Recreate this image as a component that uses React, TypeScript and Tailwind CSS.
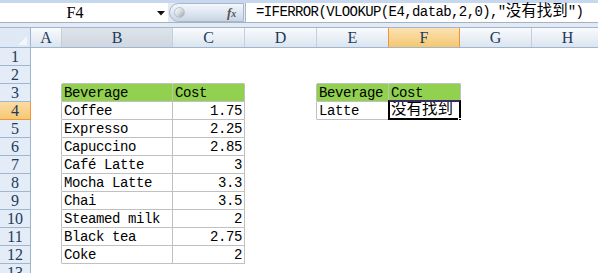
import React from "react";

const FONT = { fontFamily: '"Liberation Mono", "Noto Sans CJK SC", monospace' };
const SERIF = { fontFamily: '"Liberation Serif", "Noto Sans CJK SC", serif' };

type Col = { name: string; w: number };
const cols: Col[] = [
  { name: "A", w: 31 },
  { name: "B", w: 111 },
  { name: "C", w: 72 },
  { name: "D", w: 72 },
  { name: "E", w: 72 },
  { name: "F", w: 72 },
  { name: "G", w: 72 },
  { name: "H", w: 72 },
];

type Cell = { text: string; right?: boolean; green?: boolean; cjk?: boolean };
const data: Record<string, Cell> = {
  B3: { text: "Beverage", green: true },
  C3: { text: "Cost", green: true },
  B4: { text: "Coffee" },
  C4: { text: "1.75", right: true },
  B5: { text: "Expresso" },
  C5: { text: "2.25", right: true },
  B6: { text: "Capuccino" },
  C6: { text: "2.85", right: true },
  B7: { text: "Café Latte" },
  C7: { text: "3", right: true },
  B8: { text: "Mocha Latte" },
  C8: { text: "3.3", right: true },
  B9: { text: "Chai" },
  C9: { text: "3.5", right: true },
  B10: { text: "Steamed milk" },
  C10: { text: "2", right: true },
  B11: { text: "Black tea" },
  C11: { text: "2.75", right: true },
  B12: { text: "Coke" },
  C12: { text: "2", right: true },
  E3: { text: "Beverage", green: true },
  F3: { text: "Cost", green: true },
  E4: { text: "Latte" },
  F4: { text: "没有找到", cjk: true },
};

function inTable(r: number, c: number): boolean {
  const n = cols[c]?.name;
  if (!n) return false;
  if ((n === "B" || n === "C") && r >= 3 && r <= 12) return true;
  if ((n === "E" || n === "F") && r >= 3 && r <= 4) return true;
  return false;
}

function BodyCell({ r, c }: { r: number; c: number }) {
  const col = cols[c];
  const key = col.name + r;
  const cell = data[key];
  const right = inTable(r, c) || inTable(r, c + 1);
  const bottom = inTable(r, c) || inTable(r + 1, c);
  const selected = key === "F4";
  return (
    <div
      className={
        "relative h-[18px] shrink-0 border-r border-b box-border " +
        (right ? "border-r-[#c0c0c0] " : "border-r-white ") +
        (bottom ? "border-b-[#c0c0c0] " : "border-b-white ") +
        (cell?.green ? "bg-[#92d050]" : "bg-white")
      }
      style={{ width: col.w }}
    >
      {cell && (
        <div
          className={
            "whitespace-nowrap text-black " +
            (cell.cjk
              ? "pl-[2px] pt-[0px] text-[15.5px] leading-[17px]"
              : "pt-[2px] text-[14px] leading-[15px] tracking-[-0.4px] " + (cell.right ? "pr-[2px] text-right" : "pl-[2px]"))
          }
          style={FONT}
        >
          {cell.text}
        </div>
      )}
      {selected && (
        <>
          <div className="absolute left-[-1px] top-[-2px] h-[20px] w-[73px] border-2 border-black border-t-[#3a2a63] pointer-events-none" />
          <div className="absolute left-[69px] top-[16px] h-[5px] w-[5px] bg-black border border-white" />
        </>
      )}
    </div>
  );
}

export default function App() {
  const rows = Array.from({ length: 13 }, (_, i) => i + 1);
  return (
    <div className="w-[598px] h-[273px] overflow-hidden bg-white select-none" style={FONT}>
      {/* Formula bar */}
      <div className="h-[27px] bg-[#e3eaf4] flex flex-col">
        <div className="h-[3px] bg-[#c7d8ee]" />
        <div className="h-[19px] flex">
          <div className="w-[168px] bg-white flex items-center relative">
            <div className="w-[150px] text-center text-[16px] leading-[19px] text-black" style={SERIF}>F4</div>
            <svg className="absolute left-[157px] top-[8px]" width="8" height="5" viewBox="0 0 8 5">
              <polygon points="0,0 8,0 4,4.5" fill="#111" />
            </svg>
          </div>
          <div className="w-[76px] bg-[#e3eaf4] flex items-center pl-[1px]">
            <div className="relative h-[19px] w-[75px] rounded-l-[10px] border border-[#a8b7cb] bg-gradient-to-b from-[#f4f7fb] via-[#dfe7f1] to-[#c9d5e4] flex items-center">
              <div className="ml-[4px] h-[11px] w-[11px] rounded-full bg-gradient-to-br from-white via-[#d6dbe1] to-[#9aa3ad] border border-[#b9c2cc]" />
              <span
                className="absolute left-[57px] top-[0px] text-[13px] leading-[17px] italic font-bold text-[#555]"
                style={{ fontFamily: '"Liberation Serif", serif' }}
              >
                f<span className="text-[10px]">x</span>
              </span>
            </div>
          </div>
          <div className="flex-1 bg-white border-l border-[#a8b7cb] ml-[1px] flex items-center pl-[10px]">
            <span className="whitespace-nowrap text-[14px] leading-[19px] tracking-[-0.6px] text-black">
              =IFERROR(VLOOKUP(E4,datab,2,0),"<span className="text-[15.5px] tracking-normal">没有找到</span>")
            </span>
          </div>
        </div>
        <div className="h-[1px] bg-[#a4b2c4]" />
        <div className="flex-1" />
      </div>

      {/* Column headers */}
      <div className="flex h-[19px] border-t border-[#9eb6ce] border-b border-b-[#9eb6ce] box-content">
        <div className="w-[31px] shrink-0 border-r border-[#9eb6ce] bg-[#dfe8f5] relative">
          <svg className="absolute right-[3px] bottom-[2px]" width="9" height="9" viewBox="0 0 9 9">
            <polygon points="9,0 9,9 0,9" fill="#f3f6fa" />
          </svg>
        </div>
        {cols.map((c) => {
          const sel = c.name === "F";
          const hov = c.name === "B";
          return (
            <div
              key={c.name}
              className={
                "shrink-0 border-r text-center text-[16px] leading-[19px] " +
                (sel
                  ? "bg-gradient-to-b from-[#fbe2b4] to-[#f5c76f] border-[#f29536] border-l border-l-[#f29536] text-[#1d3b5c]"
                  : hov
                  ? "bg-gradient-to-b from-[#dfe4ea] to-[#cfd7e1] border-[#c3cfdd] text-[#1d3b5c]"
                  : "bg-gradient-to-b from-[#f9fbfd] to-[#dbe4ef] border-[#c3cfdd] text-[#1d3b5c]")
              }
              style={{ width: c.w, marginLeft: sel ? -1 : 0, ...SERIF }}
            >
              {c.name}
            </div>
          );
        })}
        <div className="flex-1 bg-gradient-to-b from-[#f9fbfd] to-[#dbe4ef]" />
      </div>

      {/* Body */}
      {rows.map((r) => (
        <div key={r} className="flex">
          <div
            className={
              "w-[31px] h-[18px] shrink-0 border-r border-b box-border text-center text-[16px] leading-[18px] " +
              (r === 4
                ? "bg-gradient-to-b from-[#fbdca4] to-[#f6c873] border-[#f29536] text-[#1d3b5c]"
                : "bg-[#e4ecf7] border-[#9eb6ce] text-[#1d3b5c]")
            }
            style={SERIF}
          >
            {r}
          </div>
          {cols.map((_, ci) => (
            <BodyCell key={ci} r={r} c={ci} />
          ))}
        </div>
      ))}
    </div>
  );
}
